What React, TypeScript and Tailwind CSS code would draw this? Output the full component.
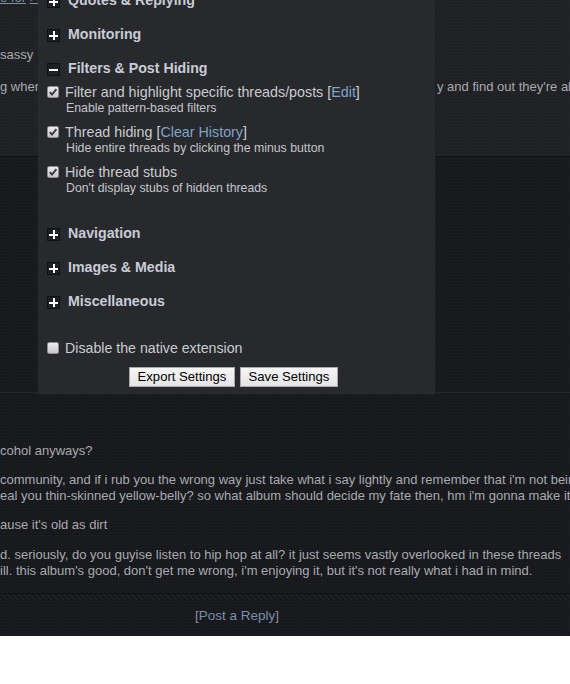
import React from "react";

const dots =
  "bg-[radial-gradient(circle,rgba(255,255,255,0.035)_0.6px,transparent_0.9px)] bg-[length:3px_3px]";

function PlusBox({ open }: { open?: boolean }) {
  return (
    <span className="flex h-[13px] w-[13px] shrink-0 items-center justify-center border border-[#101113] bg-[#1e1f22]">
      <svg width="11" height="11" viewBox="0 0 11 11" shapeRendering="crispEdges">
        <rect x="1" y="4.5" width="9" height="2" fill="#fff" />
        {!open && <rect x="4.5" y="1" width="2" height="9" fill="#fff" />}
      </svg>
    </span>
  );
}

function Check({ checked }: { checked?: boolean }) {
  return (
    <span className="mt-[2px] flex h-[12px] w-[12px] shrink-0 items-center justify-center rounded-[2px] border border-[#8c8c8c] bg-[linear-gradient(#ececec,#c9c9c9)]">
      {checked && (
        <svg width="10" height="10" viewBox="0 0 10 10">
          <path d="M1.8 5.2L4 7.6L8.4 2.2" fill="none" stroke="#3b3b3b" strokeWidth="1.9" />
        </svg>
      )}
    </span>
  );
}

function Section({ title, open }: { title: string; open?: boolean }) {
  return (
    <div className="flex h-[34px] items-center gap-[8px] px-[9px]">
      <PlusBox open={open} />
      <span className="text-[14.2px] font-bold text-[#c8ccd6]">{title}</span>
    </div>
  );
}

function Option({ children, sub, checked }: { children: React.ReactNode; sub: string; checked?: boolean }) {
  return (
    <div className="flex gap-[6px] pl-[9px]">
      <Check checked={checked} />
      <div>
        <div className="text-[14.3px] leading-[16px] text-[#c8cbd0]">{children}</div>
        <div className="ml-[1px] text-[12.3px] leading-[16px] text-[#c3c6cb]">{sub}</div>
      </div>
    </div>
  );
}

const link = "text-[#7ea3c8]";

export default function App() {
  return (
    <div className="relative h-[684px] w-[570px] overflow-hidden bg-white font-['Liberation_Sans',Arial,sans-serif]">
      <div className="flex flex-col bg-[#18191c] text-[13px] text-[#a7aaaf]">
        <div className={`flex h-[157px] flex-col border-b border-[#111214] bg-[#202124] ${dots}`}>
          <div className="-mt-[10px] leading-[16px] text-[#7f8fa0]">
            <span className="underline">e for</span> <span className="underline">&gt;&gt;</span>
          </div>
          <div className="mt-[41px] leading-[16px]">sassy</div>
          <div className="mt-[16px] flex whitespace-nowrap leading-[16px]">
            <span className="w-[437px] shrink-0 overflow-hidden">g when you finally get around to it an</span>
            <span>y and find out they're all gone</span>
          </div>
        </div>
        <div className={`h-[236px] border-b border-[#26272a] ${dots}`} />
        <div className={`overflow-hidden whitespace-nowrap pb-[14px] pt-[50px] leading-[16px] ${dots}`}>
          <div>cohol anyways?</div>
          <div className="mt-[13px]">
            community, and if i rub you the wrong way just take what i say lightly and remember that i'm not being
          </div>
          <div>eal you thin-skinned yellow-belly? so what album should decide my fate then, hm i'm gonna make it</div>
          <div className="mt-[13px]">ause it's old as dirt</div>
          <div className="mt-[14px]">
            d. seriously, do you guyise listen to hip hop at all? it just seems vastly overlooked in these threads
          </div>
          <div>ill. this album's good, don't get me wrong, i'm enjoying it, but it's not really what i had in mind.</div>
        </div>
        <div className="h-[7px] border-t border-[#0f1012] bg-[repeating-linear-gradient(45deg,#1e1f22_0px,#1e1f22_2px,#17181b_2px,#17181b_4px)]" />
        <div className={`h-[36px] pl-[195px] pt-[8px] text-[13.5px] leading-[16px] ${dots}`}>
          <span className="text-[#8d9096]">[</span>
          <span className="text-[#7990a8]">Post a Reply</span>
          <span className="text-[#8d9096]">]</span>
        </div>
      </div>

      <div className="absolute left-[38px] top-[-16px] flex w-[398px] flex-col border-r border-[#1b1c1f] bg-[#28292d] pb-[7px]">
        <Section title="Quotes & Replying" />
        <Section title="Monitoring" />
        <Section title="Filters & Post Hiding" open />
        <div className="-mt-[2px] flex flex-col gap-[8px]">
          <Option checked sub="Enable pattern-based filters">
            Filter and highlight specific threads/posts [<span className={link}>Edit</span>]
          </Option>
          <Option checked sub="Hide entire threads by clicking the minus button">
            Thread hiding [<span className={link}>Clear History</span>]
          </Option>
          <Option checked sub="Don't display stubs of hidden threads">
            Hide thread stubs
          </Option>
        </div>
        <div className="mt-[21px]">
          <Section title="Navigation" />
          <Section title="Images & Media" />
          <Section title="Miscellaneous" />
        </div>
        <div className="mt-[21px] flex gap-[6px] pl-[9px]">
          <Check />
          <span className="text-[14.2px] leading-[16px] text-[#c8cbd0]">Disable the native extension</span>
        </div>
        <div className="mt-[11px] flex justify-center gap-[5px] pr-[6px]">
          <button className="h-[20px] w-[106px] border border-[#a9a9a9] bg-[linear-gradient(#f6f6f6,#e4e4e4)] text-[13.1px] leading-[18px] text-black">
            Export Settings
          </button>
          <button className="h-[20px] w-[98px] border border-[#a9a9a9] bg-[linear-gradient(#f6f6f6,#e4e4e4)] text-[13.1px] leading-[18px] text-black">
            Save Settings
          </button>
        </div>
      </div>
    </div>
  );
}
